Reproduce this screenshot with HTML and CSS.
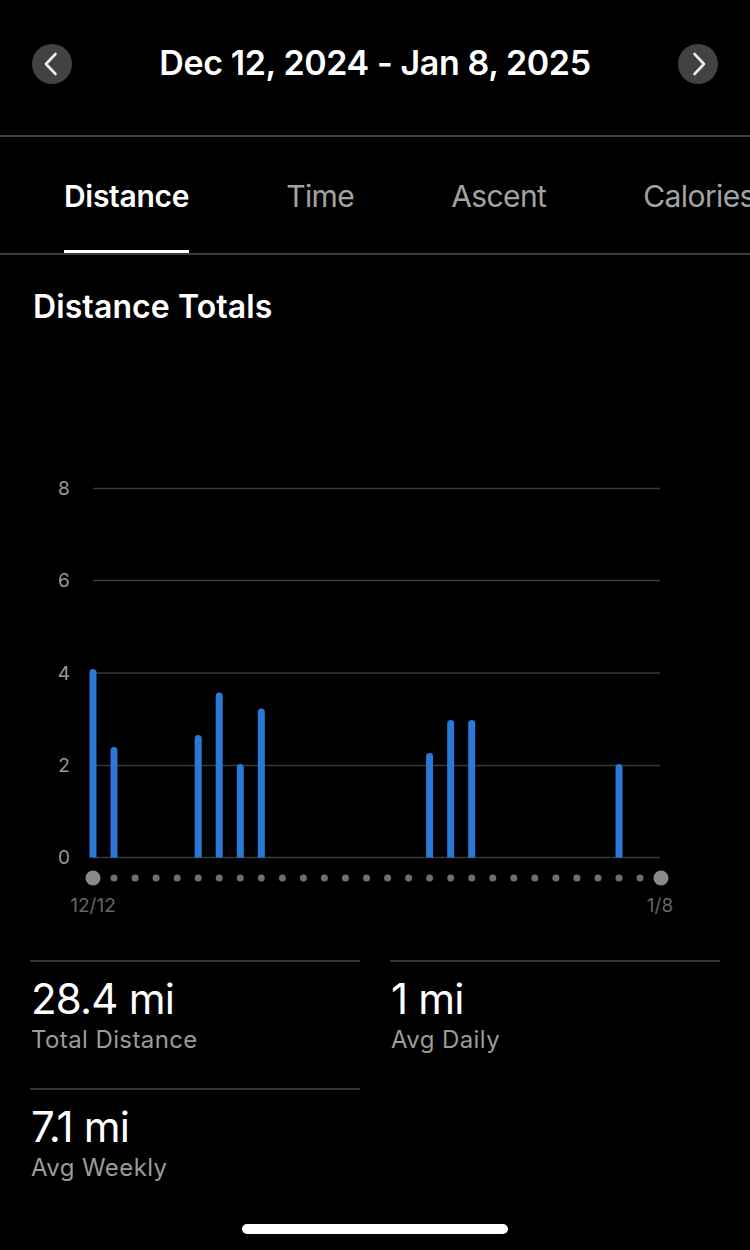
FILE: index.html
```html
<!DOCTYPE html>
<html>
<head>
<meta charset="utf-8">
<link rel="stylesheet" href="styles.css">
</head>
<body>
<div class="screen">
  <header class="header">
    <button class="nav-btn" aria-label="Previous">
      <svg width="40" height="40" viewBox="0 0 40 40"><path d="M23.5 10 L14 20 L23.5 30" fill="none" stroke="#ececec" stroke-width="2.6" stroke-linecap="round" stroke-linejoin="round"/></svg>
    </button>
    <h1 class="title">Dec 12, 2024 - Jan 8, 2025</h1>
    <button class="nav-btn" aria-label="Next">
      <svg width="40" height="40" viewBox="0 0 40 40"><path d="M16.5 10 L26 20 L16.5 30" fill="none" stroke="#ececec" stroke-width="2.6" stroke-linecap="round" stroke-linejoin="round"/></svg>
    </button>
  </header>

  <nav class="tabs">
    <div class="tab active">Distance</div>
    <div class="tab">Time</div>
    <div class="tab">Ascent</div>
    <div class="tab">Calories</div>
  </nav>

  <h2 class="section-title">Distance Totals</h2>

  <svg class="chart" width="750" height="600" viewBox="0 325 750 600">
    <g class="grid">
      <line x1="93" y1="488.5" x2="660" y2="488.5"/>
      <line x1="93" y1="580.5" x2="660" y2="580.5"/>
      <line x1="93" y1="673" x2="660" y2="673"/>
      <line x1="93" y1="765.5" x2="660" y2="765.5"/>
      <line x1="93" y1="857.5" x2="660" y2="857.5"/>
    </g>
    <g class="ylabels">
      <text x="64" y="495">8</text>
      <text x="64" y="587">6</text>
      <text x="64" y="680">4</text>
      <text x="64" y="772">2</text>
      <text x="64" y="864">0</text>
    </g>
    <g class="bars">
      <path d="M89.5 857.5 V672.5 A3.5 3.5 0 0 1 96.5 672.5 V857.5 Z"/>
      <path d="M110.5 857.5 V750.5 A3.5 3.5 0 0 1 117.5 750.5 V857.5 Z"/>
      <path d="M194.7 857.5 V738.5 A3.5 3.5 0 0 1 201.7 738.5 V857.5 Z"/>
      <path d="M215.7 857.5 V696 A3.5 3.5 0 0 1 222.7 696 V857.5 Z"/>
      <path d="M236.8 857.5 V767.5 A3.5 3.5 0 0 1 243.8 767.5 V857.5 Z"/>
      <path d="M257.8 857.5 V712 A3.5 3.5 0 0 1 264.8 712 V857.5 Z"/>
      <path d="M426.1 857.5 V756.5 A3.5 3.5 0 0 1 433.1 756.5 V857.5 Z"/>
      <path d="M447.2 857.5 V723.5 A3.5 3.5 0 0 1 454.2 723.5 V857.5 Z"/>
      <path d="M468.2 857.5 V723.5 A3.5 3.5 0 0 1 475.2 723.5 V857.5 Z"/>
      <path d="M615.5 857.5 V767.5 A3.5 3.5 0 0 1 622.5 767.5 V857.5 Z"/>
    </g>
    <g class="dots">
      <circle class="big" cx="93" cy="878" r="7.5"/>
      <circle cx="114.0" cy="878" r="3.5"/>
      <circle cx="135.1" cy="878" r="3.5"/>
      <circle cx="156.1" cy="878" r="3.5"/>
      <circle cx="177.2" cy="878" r="3.5"/>
      <circle cx="198.2" cy="878" r="3.5"/>
      <circle cx="219.2" cy="878" r="3.5"/>
      <circle cx="240.3" cy="878" r="3.5"/>
      <circle cx="261.3" cy="878" r="3.5"/>
      <circle cx="282.4" cy="878" r="3.5"/>
      <circle cx="303.4" cy="878" r="3.5"/>
      <circle cx="324.4" cy="878" r="3.5"/>
      <circle cx="345.5" cy="878" r="3.5"/>
      <circle cx="366.5" cy="878" r="3.5"/>
      <circle cx="387.6" cy="878" r="3.5"/>
      <circle cx="408.6" cy="878" r="3.5"/>
      <circle cx="429.6" cy="878" r="3.5"/>
      <circle cx="450.7" cy="878" r="3.5"/>
      <circle cx="471.7" cy="878" r="3.5"/>
      <circle cx="492.8" cy="878" r="3.5"/>
      <circle cx="513.8" cy="878" r="3.5"/>
      <circle cx="534.8" cy="878" r="3.5"/>
      <circle cx="555.9" cy="878" r="3.5"/>
      <circle cx="576.9" cy="878" r="3.5"/>
      <circle cx="598.0" cy="878" r="3.5"/>
      <circle cx="619.0" cy="878" r="3.5"/>
      <circle cx="640.0" cy="878" r="3.5"/>
      <circle class="big" cx="661" cy="878" r="7.5"/>
    </g>
    <g class="xlabels">
      <text x="93" y="912">12/12</text>
      <text x="660" y="912">1/8</text>
    </g>
  </svg>

  <section class="stats">
    <div class="stat">
      <div class="stat-value">28.4 mi</div>
      <div class="stat-label">Total Distance</div>
    </div>
    <div class="stat">
      <div class="stat-value">1 mi</div>
      <div class="stat-label">Avg Daily</div>
    </div>
    <div class="stat">
      <div class="stat-value">7.1 mi</div>
      <div class="stat-label">Avg Weekly</div>
    </div>
  </section>

  <div class="home-bar"><div class="home-indicator"></div></div>
</div>
</body>
</html>
```

FILE: styles.css
```css
* { box-sizing: border-box; }
html, body {
  margin: 0;
  padding: 0;
  background: #000;
}
body {
  font-family: Inter, "Noto Sans", sans-serif;
  color: #fff;
}
.screen {
  width: 750px;
  height: 1250px;
  overflow: hidden;
  background: #000;
}
.header {
  height: 137px;
  padding: 43px 32px 0 32px;
  display: flex;
  align-items: flex-start;
  justify-content: space-between;
  border-bottom: 2px solid #3c3c3c;
}
.nav-btn {
  width: 40px;
  height: 40px;
  margin-top: 1px;
  border: none;
  border-radius: 50%;
  background: #424243;
  padding: 0;
  display: flex;
  align-items: center;
  justify-content: center;
}
.title {
  margin: 0;
  font-size: 34px;
  line-height: 40px;
  font-weight: 600;
  letter-spacing: -0.4px;
}
.tabs {
  display: flex;
  gap: 97px;
  padding-left: 64px;
  height: 118px;
  padding-top: 41px;
  border-bottom: 2px solid #3c3c3c;
  overflow: hidden;
  white-space: nowrap;
}
.tab {
  font-size: 30px;
  line-height: 36px;
  height: 75px;
  color: #a3a3a3;
  letter-spacing: -0.6px;
  border-bottom: 3px solid transparent;
  flex-shrink: 0;
}
.tab.active {
  color: #fff;
  font-weight: 600;
  letter-spacing: -0.3px;
  border-bottom-color: #fff;
}
.section-title {
  margin: 34px 0 0 33px;
  font-size: 32px;
  line-height: 36px;
  font-weight: 600;
  letter-spacing: 0.1px;
}
.chart {
  display: block;
  margin-top: 0;
}
.grid line {
  stroke: #3a3a3a;
  stroke-width: 1.5;
}
.ylabels text {
  fill: #9a9a9a;
  font-size: 19px;
  text-anchor: middle;
  font-family: Inter, sans-serif;
}
.xlabels text {
  fill: #666;
  font-size: 19px;
  text-anchor: middle;
  font-family: Inter, sans-serif;
}
.bars path { fill: #2a79d8; }
.dots circle { fill: #6f6f6f; }
.dots circle.big { fill: #8a8a8a; }
.stats {
  display: grid;
  grid-template-columns: 330px 330px;
  column-gap: 30px;
  padding: 0 30px;
  margin-top: 35px;
}
.stat {
  height: 128px;
  border-top: 2px solid #333;
  padding-top: 13px;
}
.stat-value {
  font-size: 42px;
  line-height: 48px;
  font-weight: 400;
  letter-spacing: -0.8px;
  padding-left: 1px;
}
.stat-label {
  margin-top: 3px;
  font-size: 24px;
  line-height: 28px;
  color: #9b9b9b;
  letter-spacing: 0.4px;
  padding-left: 1px;
}
.home-bar {
  display: flex;
  justify-content: center;
  padding-top: 8px;
}
.home-indicator {
  width: 266px;
  height: 10px;
  border-radius: 5px;
  background: #fff;
}
```
